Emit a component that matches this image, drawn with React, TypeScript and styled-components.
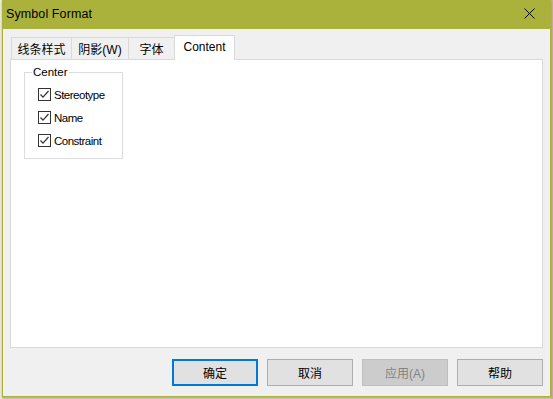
import styled, { createGlobalStyle } from "styled-components";

const GlobalStyle = createGlobalStyle`
  html, body {
    margin: 0;
    padding: 0;
    background: #d9d3c9;
  }
  body {
    font-family: "Liberation Sans", "Noto Sans CJK SC", sans-serif;
  }
`;

// Desktop behind the dialog
const Desktop = styled.div`
  width: 553px;
  height: 399px;
  overflow: hidden;
  padding-left: 2px;
  box-sizing: border-box;
  background: linear-gradient(90deg, #eeeae0 0 2px, #d9d3c9 2px 551px, #d6a79c 551px);
`;

const Window = styled.div`
  width: 549px;
  height: 397px;
  box-sizing: border-box;
  border: 1px solid #a9b23c;
  border-top: none;
  background: #f0f0f0;
  display: flex;
  flex-direction: column;
  box-shadow: 0 1px 2px rgba(0, 0, 0, 0.25);
`;

// Title bar
const TitleBar = styled.div`
  height: 29px;
  flex: none;
  background: #aab23c;
  display: flex;
  align-items: center;
  justify-content: space-between;
  padding: 0 0 1px 4px;
  margin: 0 -1px;
  box-sizing: border-box;
`;

const Title = styled.span`
  font-size: 12.5px;
  color: #000;
  letter-spacing: 0.1px;
`;

const CloseButton = styled.button`
  width: 46px;
  height: 28px;
  border: none;
  background: transparent;
  display: flex;
  align-items: center;
  justify-content: center;
  padding: 0 0 2px 2px;
`;

const Body = styled.div`
  flex: 1;
  display: flex;
  flex-direction: column;
  padding: 6px 6px 0 7px;
`;

// Tabs
const TabRow = styled.div`
  display: flex;
  align-items: flex-end;
  height: 24px;
  padding-left: 1px;
`;

const Tab = styled.div<{ $w: number; $active?: boolean }>`
  width: ${({ $w }) => $w}px;
  height: ${({ $active }) => ($active ? 25 : 22)}px;
  margin-left: -1px;
  margin-bottom: ${({ $active }) => ($active ? -1 : 0)}px;
  box-sizing: border-box;
  border: 1px solid #d9d9d9;
  border-bottom: none;
  background: ${({ $active }) => ($active ? "#ffffff" : "#f0f0f0")};
  position: relative;
  z-index: ${({ $active }) => ($active ? 1 : 0)};
  display: flex;
  align-items: center;
  justify-content: center;
  padding-bottom: ${({ $active }) => ($active ? 3 : 0)}px;
  font-size: 12px;
  color: #000;
  white-space: nowrap;

  &:first-child {
    margin-left: 0;
  }
`;

const Panel = styled.div`
  height: 289px;
  margin-right: 1px;
  box-sizing: border-box;
  border: 1px solid #d9d9d9;
  background: #ffffff;
  padding: 5px 0 0 13px;
`;

// Group box
const Group = styled.fieldset`
  width: 99px;
  box-sizing: border-box;
  margin: 0;
  border: 1px solid #dcdcdc;
  padding: 4px 8px 6px 13px;
`;

const Legend = styled.legend`
  font-size: 11.5px;
  line-height: 14px;
  padding: 0 1px;
  margin-left: -6px;
  color: #000;
`;

const CheckRow = styled.label`
  display: flex;
  align-items: center;
  height: 23px;
  gap: 3px;
  font-size: 11.5px;
  color: #000;
  white-space: nowrap;
  letter-spacing: -0.5px;
`;

const Box = styled.span`
  width: 13px;
  height: 13px;
  box-sizing: border-box;
  border: 1px solid #333333;
  background: #ffffff;
  display: flex;
  align-items: center;
  justify-content: center;
  flex: none;
`;

// Buttons
const ButtonRow = styled.div`
  display: flex;
  justify-content: flex-end;
  gap: 9px;
  margin-top: 11px;
  padding-right: 1px;
`;

const Button = styled.button<{ $default?: boolean }>`
  width: 86px;
  height: 27px;
  box-sizing: border-box;
  border: ${({ $default }) => ($default ? "2px solid #0078d7" : "1px solid #adadad")};
  background: ${({ disabled }) => (disabled ? "#cccccc" : "#e1e1e1")};
  border-color: ${({ disabled, $default }) => (disabled ? "#bfbfbf" : $default ? "#0078d7" : "#adadad")};
  color: ${({ disabled }) => (disabled ? "#838383" : "#000000")};
  font-family: "Liberation Sans", "Noto Sans CJK SC", sans-serif;
  font-size: 12px;
  padding: 0 0 1px;
`;

const Check = () => (
  <svg width="11" height="11" viewBox="0 0 11 11">
    <path d="M1.5 5.5 L4 8.2 L9.5 2" fill="none" stroke="#333" strokeWidth="1.2" />
  </svg>
);

const items = ["Stereotype", "Name", "Constraint"];

const tabs = [
  { label: "线条样式", w: 61 },
  { label: "阴影(W)", w: 58 },
  { label: "字体", w: 47 },
  { label: "Content", w: 61, active: true },
];

export default function App() {
  return (
    <>
      <GlobalStyle />
      <Desktop>
        <Window>
          <TitleBar>
            <Title>Symbol Format</Title>
            <CloseButton aria-label="Close">
              <svg width="11" height="11" viewBox="0 0 11 11">
                <path d="M0.5 0.5 L10.5 10.5 M10.5 0.5 L0.5 10.5" stroke="#000" strokeWidth="1" />
              </svg>
            </CloseButton>
          </TitleBar>
          <Body>
            <TabRow>
              {tabs.map((t) => (
                <Tab key={t.label} $w={t.w} $active={t.active}>
                  {t.label}
                </Tab>
              ))}
            </TabRow>
            <Panel>
              <Group>
                <Legend>Center</Legend>
                {items.map((it) => (
                  <CheckRow key={it}>
                    <Box>
                      <Check />
                    </Box>
                    {it}
                  </CheckRow>
                ))}
              </Group>
            </Panel>
            <ButtonRow>
              <Button $default>确定</Button>
              <Button>取消</Button>
              <Button disabled>应用(A)</Button>
              <Button>帮助</Button>
            </ButtonRow>
          </Body>
        </Window>
      </Desktop>
    </>
  );
}
